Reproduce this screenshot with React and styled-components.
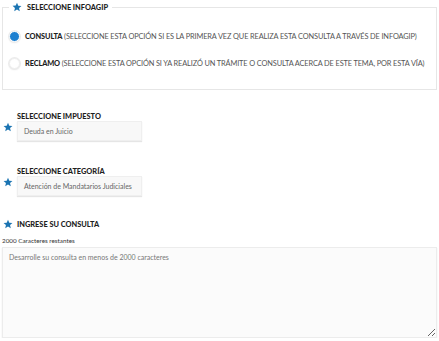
import React from "react";
import styled, { createGlobalStyle } from "styled-components";

const Global = createGlobalStyle`
  html, body { margin: 0; padding: 0; background: #fff; }
  body { font-family: Lato, "Liberation Sans", sans-serif; color: #333; }
  * { box-sizing: border-box; }
`;

const Page = styled.div`
  width: 439px;
  padding: 0 2px 0 2px;
`;

const Fieldset = styled.fieldset`
  margin: 2px 0 0 0;
  padding: 8px 0 14px 6px;
  border: 1px solid #e6e6e6;
  min-width: 0;
  height: 88px;
`;

const Legend = styled.legend`
  margin-left: 0;
  padding: 0 4px 0 3px;
  display: flex;
  align-items: center;
  gap: 5px;
`;

const Label = styled.span`
  font-size: 7.4px;
  line-height: 9px;
  font-weight: 900;
  color: #1f1f1f;
  letter-spacing: 0;
`;

const StarIcon = ({ size = 10 }) => (
  <svg width={size} height={size} viewBox="0 0 24 24" aria-hidden="true" style={{ flex: "none" }}>
    <path
      d="M12 1.5l3.1 7.2 7.6.6-5.8 5 1.8 7.6L12 17.8l-6.7 4.1 1.8-7.6-5.8-5 7.6-.6z"
      fill="#1b74b2"
    />
  </svg>
);

const RadioRow = styled.label`
  display: flex;
  align-items: center;
  gap: 5px;
  height: 11px;
  margin-top: ${(p) => p.$mt}px;
`;

const RadioDot = styled.span`
  width: 11px;
  height: 11px;
  border-radius: 50%;
  background: ${(p) => (p.$checked ? "#1b7fd0" : "#fff")};
  border: ${(p) => (p.$checked ? "1.5px solid #fff" : "1px solid #eee")};
  box-shadow: 0 0 0 1px #ececec, 0 1px 2px rgba(0, 0, 0, 0.08);
  flex: none;
`;

const RadioText = styled.span`
  font-size: 7.4px;
  letter-spacing: -0.13px;
  color: #555;
  white-space: nowrap;
  b { color: #1f1f1f; font-weight: 900; }
`;

const FieldRow = styled.div`
  display: flex;
  align-items: center;
  gap: 4px;
  margin-top: ${(p) => p.$mt}px;
  padding-left: 1px;
`;

const FieldBody = styled.div`
  display: flex;
  flex-direction: column;
  gap: 0;
`;

const SelectBox = styled.div`
  width: 125px;
  height: 20px;
  background: #f8f8f8;
  border: 1px solid #efefef;
  box-shadow: 0 1px 1px rgba(0, 0, 0, 0.1);
  font-size: 7px;
  color: #666;
  display: flex;
  align-items: center;
  padding-left: 6px;
`;

const HeaderRow = styled.div`
  display: flex;
  align-items: center;
  gap: 4px;
  margin-top: ${(p) => p.$mt}px;
  padding-left: 1px;
`;

const Remaining = styled.div`
  font-size: 6.3px;
  color: #333;
  margin-top: 8px;
  height: 8px;
  line-height: 8px;
`;

const TextArea = styled.textarea`
  display: block;
  width: 435px;
  height: 91px;
  margin-top: 2px;
  background: #fbfbfb;
  border: 1px solid #ececec;
  box-shadow: 0 1px 1px rgba(0, 0, 0, 0.12);
  padding: 5px 6px;
  font-family: Lato, "Liberation Sans", sans-serif;
  font-size: 7px;
  color: #666;
  resize: both;
  outline: none;
  &::placeholder { color: #777; }
`;

export default function App() {
  return (
    <Page>
      <Global />
      <Fieldset>
        <Legend>
          <StarIcon size={10} />
          <Label>SELECCIONE INFOAGIP</Label>
        </Legend>
        <RadioRow $mt={11}>
          <RadioDot $checked />
          <RadioText>
            <b>CONSULTA</b> (SELECCIONE ESTA OPCIÓN SI ES LA PRIMERA VEZ QUE REALIZA ESTA CONSULTA A TRAVÉS DE INFOAGIP)
          </RadioText>
        </RadioRow>
        <RadioRow $mt={16}>
          <RadioDot />
          <RadioText>
            <b>RECLAMO</b> (SELECCIONE ESTA OPCIÓN SI YA REALIZÓ UN TRÁMITE O CONSULTA ACERCA DE ESTE TEMA, POR ESTA VÍA)
          </RadioText>
        </RadioRow>
      </Fieldset>
      <FieldRow $mt={22}>
        <StarIcon size={10} />
        <FieldBody>
          <Label>SELECCIONE IMPUESTO</Label>
          <SelectBox>Deuda en Juicio</SelectBox>
        </FieldBody>
      </FieldRow>
      <FieldRow $mt={26}>
        <StarIcon size={10} />
        <FieldBody>
          <Label>SELECCIONE CATEGORÍA</Label>
          <SelectBox>Atención de Mandatarios Judiciales</SelectBox>
        </FieldBody>
      </FieldRow>
      <HeaderRow $mt={23}>
        <StarIcon size={10} />
        <Label>INGRESE SU CONSULTA</Label>
      </HeaderRow>
      <Remaining>2000 Caracteres restantes</Remaining>
      <TextArea placeholder="Desarrolle su consulta en menos de 2000 caracteres" />
    </Page>
  );
}
